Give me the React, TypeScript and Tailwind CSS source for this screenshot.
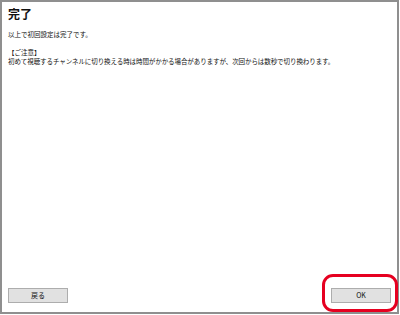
export default function App() {
  return (
    <div
      className="relative w-[400px] h-[315px] bg-white"
      style={{ fontFamily: '"Noto Sans CJK JP", "Noto Sans", sans-serif' }}
    >
      <div className="flex flex-col w-[399px] h-[314px] border-2 border-[#8f8f8f] bg-white text-[#111]">
        {/* ── Content ─────────────────────────────────────────── */}
        <div className="flex-1 pl-[6px] pt-[5px]">
          <h1 className="text-[12px] leading-[14px] font-bold">完了</h1>
          <p className="mt-[9px] text-[6.5px] leading-[9px]">以上で初回設定は完了です。</p>
          <p className="mt-[9px] text-[6.5px] leading-[9px]">【ご注意】</p>
          <p className="text-[6.5px] leading-[9px] tracking-[-0.08px]">
            初めて視聴するチャンネルに切り換える時は時間がかかる場合がありますが、次回からは数秒で切り換わります。
          </p>
        </div>

        {/* ── Buttons ─────────────────────────────────────────── */}
        <div className="flex items-center justify-between pl-[6px] pr-[6px] pb-[9px]">
          <button className="w-[60px] h-[15px] bg-[#e1e1e1] border border-[#adadad] text-[7px] leading-none text-[#111]">
            戻る
          </button>
          <button className="w-[60px] h-[15px] bg-[#e1e1e1] border border-[#adadad] text-[7px] leading-none text-[#111]">
            OK
          </button>
        </div>
      </div>

      {/* annotation: red highlight around OK */}
      <div className="absolute left-[322px] top-[274px] w-[76px] h-[38px] rounded-[11px] border-[3px] border-[#e60020]" />
    </div>
  );
}
